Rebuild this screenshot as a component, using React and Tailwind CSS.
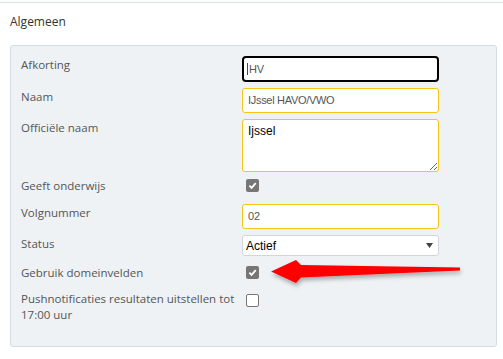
import React from "react";

const Check = ({ checked }) =>
  checked ? (
    <span className="flex h-[13px] w-[13px] items-center justify-center rounded-[2px] bg-[#767676]">
      <svg width="9" height="9" viewBox="0 0 10 10">
        <path d="M1.5 5.2 L4 7.6 L8.6 2.4" fill="none" stroke="#fff" strokeWidth="2" />
      </svg>
    </span>
  ) : (
    <span className="block h-[13px] w-[13px] rounded-[2px] border border-[#767676] bg-white" />
  );

const Label = ({ children }) => (
  <div className="w-[221px] shrink-0 pr-[4px] text-[11.5px] leading-[17px] text-[#555]">{children}</div>
);

const App = () => {
  return (
    <div className="relative h-[359px] w-[503px] overflow-hidden bg-white font-['Open_Sans',sans-serif]">
      <div className="h-[2px]" />
      <div className="border-t border-[#d6dee8]" />

      {/* kop */}
      <div className="mt-[10px] pl-[10px] text-[12px] leading-[18px] text-[#333]">Algemeen</div>

      {/* paneel */}
      <div className="ml-[10px] mt-[14px] h-[302px] w-[487px] rounded-[3px] border border-[#d3dbe3] bg-[#eef2f5] pl-[10px] pt-[10px]">
        <div className="flex items-start">
          <Label>Afkorting</Label>
          <div className="flex h-[26px] w-[197px] items-center rounded-[4px] border-2 border-black bg-white pl-[3px] font-['Liberation_Sans',sans-serif] text-[11px] tracking-[-0.2px] text-[#555]">
            <span className="mr-px h-[12px] w-px bg-[#7b1fa2]" />
            HV
          </div>
        </div>

        <div className="mt-[6px] flex items-start">
          <Label>Naam</Label>
          <div className="flex h-[25px] w-[197px] items-center rounded-[3px] border border-[#f5c518] bg-white pl-[5px] font-['Liberation_Sans',sans-serif] text-[11px] tracking-[-0.3px] text-[#555]">
            IJssel HAVO/VWO
          </div>
        </div>

        <div className="mt-[6px] flex items-start">
          <Label>Officiële naam</Label>
          <textarea
            readOnly
            defaultValue="Ijssel"
            className="h-[53px] w-[197px] rounded-[3px] border border-[#f5c518] bg-white px-[5px] py-[4px] font-['Liberation_Sans',sans-serif] text-[12px] leading-[14px] text-black outline-none"
          />
        </div>

        <div className="mt-[5px] flex items-start">
          <Label>Geeft onderwijs</Label>
          <div className="mt-[2px] pl-[4px]">
            <Check checked />
          </div>
        </div>

        <div className="mt-[10px] flex items-start">
          <Label>Volgnummer</Label>
          <div className="flex h-[25px] w-[197px] items-center rounded-[3px] border border-[#f5c518] bg-white pl-[5px] font-['Liberation_Sans',sans-serif] text-[11px] text-[#555]">
            02
          </div>
        </div>

        <div className="mt-[6px] flex items-start">
          <Label>Status</Label>
          <div className="flex h-[21px] w-[197px] items-center justify-between rounded-[3px] border border-[#cfd6de] bg-white pl-[3px] pr-[5px] font-['Liberation_Sans',sans-serif] text-[12px] text-black">
            <span>Actief</span>
            <svg width="7" height="5" viewBox="0 0 7 5">
              <path d="M0 0 H7 L3.5 5 Z" fill="#444" />
            </svg>
          </div>
        </div>

        <div className="mt-[8px] flex items-start">
          <Label>Gebruik domeinvelden</Label>
          <div className="mt-[2px] pl-[4px]">
            <Check checked />
          </div>
        </div>

        <div className="mt-[10px] flex items-start">
          <div className="w-[221px] shrink-0 pr-[2px] text-[11.5px] leading-[16px] text-[#555]">
            Pushnotificaties resultaten uitstellen tot 17:00 uur
          </div>
          <div className="mt-[3px] pl-[4px]">
            <Check />
          </div>
        </div>
      </div>

      {/* rode pijl */}
      <svg className="pointer-events-none absolute left-0 top-0" width="503" height="359">
        <defs>
          <filter id="sh" x="-10%" y="-50%" width="120%" height="200%">
            <feDropShadow dx="1" dy="3" stdDeviation="2" floodColor="#000" floodOpacity="0.3" />
          </filter>
        </defs>
        <polygon
          points="271,271.5 296,260 301,265 460,267.5 460,270.5 301,277.5 296,283"
          fill="#ff0000"
          filter="url(#sh)"
        />
      </svg>
    </div>
  );
};

export default App;
